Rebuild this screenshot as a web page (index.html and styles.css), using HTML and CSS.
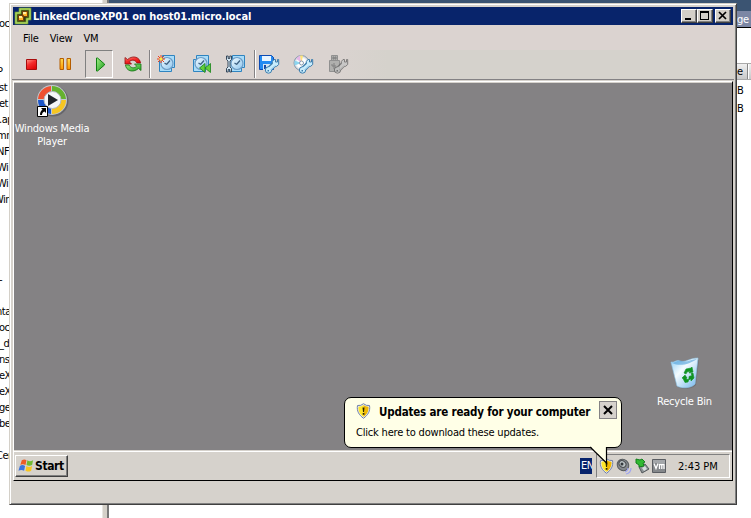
FILE: index.html
```html
<!DOCTYPE html>
<html lang="en">
<head>
<meta charset="utf-8">
<title>LinkedCloneXP01 on host01.micro.local</title>
<link rel="stylesheet" href="styles.css">
</head>
<body>
<svg width="0" height="0" class="defs" aria-hidden="true">
  <defs>
    <linearGradient id="blue" x2="1" y2="1"><stop stop-color="#f2fbff"/><stop offset="1" stop-color="#8fc6ee"/></linearGradient>
    <linearGradient id="green" x2="1" y2="1"><stop stop-color="#a4ee88"/><stop offset="1" stop-color="#1c9e1c"/></linearGradient>
    <linearGradient id="red" x2="0.6" y2="1"><stop stop-color="#ff9a8c"/><stop offset=".5" stop-color="#f42c2c"/><stop offset="1" stop-color="#e00808"/></linearGradient>
    <linearGradient id="amber" x2="0" y2="1"><stop stop-color="#ffdc50"/><stop offset="1" stop-color="#ff9500"/></linearGradient>
    <radialGradient id="silver"><stop offset=".6" stop-color="#fff"/><stop offset="1" stop-color="#c4ccd6"/></radialGradient>
    <linearGradient id="bin" x2="1" y2="1"><stop stop-color="#8ecdf4"/><stop offset=".4" stop-color="#f4fcff"/><stop offset="1" stop-color="#70b4ec"/></linearGradient>
    <g id="clock">
      <path d="M4.500.500h12v12h-3v4h-12v-12h3z" fill="#a9dcf8" stroke="#2f84c0"/>
      <circle cx="9" cy="8.500" r="6" fill="url(#blue)" stroke="#6d9cc6" stroke-width="1.200"/>
      <path d="M8.500 9.500l3.500-4M8.800 9.500L6.500 8" fill="none" stroke="#3d5f80" stroke-width="1.200"/>
    </g>
    <g id="wrench">
      <path d="M10 15L17 8" stroke="#3c7cac" stroke-width="5.500"/>
      <circle cx="10" cy="15" r="3.200" fill="#c8ecfc" stroke="#3c7cac"/>
      <path d="M15.500 4.500h1.500v2.500h2V4.500h1.200v5l-2 1.800h-2.500l-1.900-2V6.500z" fill="#c8ecfc" stroke="#3c7cac"/>
      <path d="M10 15L17.300 8.500" stroke="#c8ecfc" stroke-width="3.500"/>
      <path d="M12 15l4.500-4.500" stroke="#8cc6ea"/>
      <path d="M9 15h1.500v1.500H9z" fill="#3c7cac"/>
    </g>
    <g id="shield">
      <path d="M1.500 2.500Q5 3 7.500.7 10 3 13.500 2.500C14.500 8 12 12 7.500 15.300 3 12 .5 8 1.500 2.500z" fill="#e9edf6" stroke="#7180a8"/>
      <path d="M2.500 3.800q3 0 5-1.700v11.900C4 11.500 2 8 2.500 3.800z" fill="#ffe72c"/>
      <path d="M12.500 3.800q-3 0-5-1.700v11.900C11 11.500 13 8 12.500 3.800z" fill="#f0b800"/>
      <path d="M6.500 4.500h2L8 9H7zM6.700 10h1.700v1.700H6.700z" fill="#2a2500"/>
    </g>
  </defs>
</svg>
<div class="screen">
  <div class="back">
    <div class="list">
      <span>oca</span><span></span><span></span><span class="nudge">P</span><span>st</span><span>et</span><span>.ap</span><span class="nudge">mm</span><span class="nudge">NF</span><span class="nudge">Wi</span><span class="nudge">Wi</span><span class="deep">Win</span><span></span><span></span><span></span><span></span><span>-</span><span></span><span class="cut">nta</span><span>oca</span><span>_d</span><span>ns</span><span>eX</span><span>eX</span><span>ge</span><span>be</span><span></span><span class="cut">Cer</span>
    </div>
    <div class="splitter"></div>
    <div class="main">
      <div class="strip"></div>
      <div class="tabline">ge</div>
      <div class="blank"></div>
      <div class="colhead">e<i></i></div>
      <div class="cell">B</div>
      <div class="cell">B</div>
    </div>
  </div>

  <div class="window">
    <div class="titlebar">
      <svg class="app" width="18" height="18" viewBox="0 0 18 18"><path d="M6 2h10v10h-3v4H2V6h4z" fill="#343c10" stroke="#82b332" stroke-width="2.500"/><path d="M6 2h10v10h-3v4H2V6h4z" fill="none" stroke="#c2df7c" stroke-width=".8"/><path d="M8.500 4.500h5v5h-5zM4.500 8.500h5v5h-5z" fill="#ffb52b" stroke="#70400a"/><path d="M9 5h3v2H9zM5 9h3v2H5z" fill="#fff0a0"/></svg>
      <span class="title">LinkedCloneXP01 on host01.micro.local</span>
      <div class="controls">
        <b><svg width="14" height="12"><path d="M3 8h6v2H3z"/></svg></b><b><svg width="14" height="12"><path d="M2 1h9v9H2zM3 3v6h7V3z" fill-rule="evenodd"/></svg></b><b class="close"><svg width="14" height="12"><path d="M3 2l7 7M10 2L3 9" stroke="#000" stroke-width="1.700"/></svg></b>
      </div>
    </div>
    <div class="menu"><span>File</span><span>View</span><span>VM</span></div>
    <div class="toolbar">
      <div class="tool stop"><svg width="11" height="11" viewBox="0 0 11 11"><path d="M.5.500h10v10H.5z" fill="url(#red)" stroke="#a80c0c"/></svg></div>
      <div class="tool pause"><svg width="13" height="13"><path d="M1 .5h3.500v11H1zM8 .5h3.500v11H8z" fill="url(#amber)" stroke="#b45c00"/></svg></div>
      <div class="tool pressed"><svg width="11" height="15"><path d="M1.500 1v13h1L9.500 8V7L2.500 1z" fill="url(#green)" stroke="#108010"/></svg></div>
      <div class="tool reset"><svg width="18" height="18" viewBox="0 0 18 18"><path d="M1 2.500v6.500h6.500L5.300 6.800C7.500 4.500 11 4.500 13 8h3.500C16 2.500 9.500-.5 3.500 4.500z" fill="url(#red)" stroke="#8f1010" stroke-width=".8"/><path d="M17 15.500V9h-6.500l2.200 2.200c-2.200 2.300-5.700 2.300-7.700-1.200H1.500c.5 5.500 7 8.500 13 3.500z" fill="url(#green)" stroke="#167316" stroke-width=".8"/></svg></div>
      <i class="sep"></i>
      <div class="tool snap"><svg width="20" height="18" viewBox="0 0 20 18"><use href="#clock" x="1"/><path d="M4 0v8M0 4h8M1 1l6 6M7 1L1 7" stroke="#f0401c"/><circle cx="4" cy="4" r="1.600" fill="#ffed40"/></svg></div>
      <div class="tool revert"><svg width="20" height="18" viewBox="0 0 20 18"><use href="#clock"/><path d="M13 8.500v9l-5.500-4.500zM18.500 8.500v9L13 13z" fill="#64ce3a" stroke="#16831b" stroke-width=".8"/></svg></div>
      <div class="tool manage"><svg width="20" height="18" viewBox="0 0 20 18"><use href="#clock" x="2"/><path d="M.5 1v3.500l1.500 1.500v6L.5 13.500V17h1.700v-2.500h1.600V17h1.700v-3.500L4 12V6l1.500-1.500V1H3.800v2.500H2.200V1z" fill="#d4e8f4" stroke="#26394d" stroke-width=".9"/></svg></div>
      <i class="sep"></i>
      <div class="tool floppy"><svg width="21" height="19" viewBox="0 0 21 19"><path d="M.5.500h12l2 2v12H.5z" fill="#238bf2" stroke="#0c4bb4"/><path d="M3 1h9v5H3z" fill="#e8f5ff"/><path d="M4 9h8v6H4z" fill="#d4e5f3"/><path d="M5 10h2v4H5z" fill="#1747a3"/><use href="#wrench" x="-.5"/></svg></div>
      <div class="tool disc"><svg width="21" height="19" viewBox="0 0 21 19"><circle cx="8.500" cy="8" r="7.500" fill="url(#silver)" stroke="#8798ac"/><path d="M8.500 8L3 3.500l4-3z" fill="#e7b7e8"/><path d="M8.500 8L7 .5h3z" fill="#ffe478"/><path d="M8.500 8L1.500 10.500v-5z" fill="#8dd5ef"/><circle cx="8.500" cy="8" r="2" fill="#fff" stroke="#8798ac"/><use href="#wrench" x="-.5"/></svg></div>
      <div class="tool usb"><svg width="21" height="19" viewBox="0 0 21 19"><path d="M3.500.5h6v5h-6zM1.500 5.500h10v11h-10z" fill="#b0b0ae" stroke="#909090"/><path d="M5 2h1v2H5zM7 2h1v2H7zM6 8v6M4 9v2h4" fill="none" stroke="#808080"/><g class="muted"><use href="#wrench" x="-.5"/></g></svg></div>
    </div>

    <div class="console">
      <div class="desktop">
        <div class="shortcut wmp">
          <svg width="34" height="34" viewBox="0 0 34 34"><circle cx="18" cy="17" r="15.500" fill="#66666b"/><circle cx="17" cy="16" r="15" fill="#c3c9cf"/><path d="M16 2A14 14 0 0 0 3 15h7c0-4 3-7 6-7z" fill="#ef5130"/><path d="M17 2a14 14 0 0 1 14 13h-7c0-4-3-7-7-7z" fill="#65b22e"/><path d="M31 16a14 14 0 0 1-14 14v-7c4 0 7-3 7-7z" fill="#f6c622"/><path d="M3 16a14 14 0 0 0 13 14v-7c-4 0-6-3-6-7z" fill="#1c56ca"/><circle cx="17.500" cy="16" r="8.500" fill="#f5f7f9" stroke="#b4bbc4"/><path d="M13 10v12l10-6z" fill="#20242a"/><path d="M2.500 22.500h10v10h-10z" fill="#fff" stroke="#000"/><path d="M6 24h5v5L9.500 27.500C8 28 7 29 7 31H5c0-3 1-4 2.500-5.500z"/></svg>
          <span>Windows Media</span><span>Player</span>
        </div>
        <div class="shortcut bin">
          <svg width="32" height="32" viewBox="0 0 32 32"><path d="M3 6c8 1 20-1 27-3l-3 25c-3 4-13 5-18 2z" fill="#606068" opacity=".5"/><path d="M2 5c3 1 6-3 9-1 5 2 10-3 18-3l-3 26c-3 4-13 5-18 2z" fill="url(#bin)" stroke="#8fc6ea" stroke-width=".6"/><path d="M3 6c8 4 18 1 25-4-6 0-10 4-16 2-4-1-6 2-9 2z" fill="#4d9fd8" opacity=".6"/><path d="M15 16l2-4 5-1 1-1 1 5-4 1 1-2-3 1-1 2zM24 16l1 5-3 3v-2l-2 .5v-3l3-1-1-2zM19 25l-3 .5-2-4-1-.5 3-3 2 3h-1l1 1.500 2-.5z" fill="#109323" stroke="#109323" stroke-width=".6"/></svg>
          <span>Recycle Bin</span>
        </div>
      </div>
      <div class="taskbar">
        <div class="start"><svg width="16" height="16" viewBox="0 0 17 16"><path d="M4 2c2-1.500 4-1 5 0L8 7C6 6 4 6 2.500 7z" fill="#ed5c25"/><path d="M10 2c2 1.500 4 1 6 0l-1 5c-2 1-4 1-6 0z" fill="#72b931"/><path d="M2 8c2-1.500 4-1 5.500 0l-1 5c-2-1-4-1-6 0z" fill="#3c74dd"/><path d="M9 8c2 1.500 4 1 6 0l-1 5c-2 1.500-4 1-6 0z" fill="#f8c51e"/></svg><span>Start</span></div>
        <span class="lang">EN</span>
        <div class="tray">
          <svg width="15" height="16" viewBox="0 0 15 16"><use href="#shield"/></svg>
          <svg width="17" height="17" viewBox="0 0 17 17"><ellipse cx="7" cy="7" rx="6" ry="5.500" transform="rotate(40 7 7)" fill="#85898d" stroke="#55595d"/><ellipse cx="6.500" cy="6" rx="3.700" ry="3" transform="rotate(40 6.500 6)" fill="#b9c0c2" stroke="#4a4d50"/><circle cx="6" cy="6" r="1.500" fill="#33383c"/><path d="M12 10q0 3-3 4M15 10q0 5-5 6" fill="none" stroke="#a0a6ee" stroke-width="1.200"/></svg>
          <svg width="15" height="16" viewBox="0 0 15 16"><path d="M4 9l6-3 4 5-7 4z" fill="#8b9294" stroke="#54595c"/><path d="M7 10l3-2 2 3-3 2z" fill="#d6dddd"/><path d="M1 1l4 1 2-1 3 3-2 1 1 3-5 1V7L1 5z" fill="#32b933" stroke="#14801d"/></svg>
          <svg width="15" height="15" viewBox="0 0 15 15"><path d="M.5.500h13v13H.5z" fill="#85888b" stroke="#5a5d62"/><path d="M1 1h12v3H1z" fill="#a4a7aa"/><path d="M2 4.500l2 5 2-5M7.500 10V5.500h4.500V10M9.800 5.500V10" fill="none" stroke="#fff" stroke-width="1.300"/></svg>
          <time>2:43 PM</time>
        </div>
      </div>
      <div class="balloon">
        <div class="headline"><svg width="15" height="16" viewBox="0 0 15 16"><use href="#shield"/></svg><strong>Updates are ready for your computer</strong><button aria-label="Close"><svg width="16" height="16"><path d="M4 4l8 8M12 4l-8 8" stroke="#000" stroke-width="2"/></svg></button></div>
        <p>Click here to download these updates.</p>
        <svg class="tail" width="18" height="19" viewBox="0 0 18 19"><path d="M0 0h17v17z" fill="#ffffe7"/><path d="M0 1l16.500 16V1" fill="none" stroke="#000" stroke-width="1.200"/></svg>
      </div>
    </div>
  </div>
</div>
</body>
</html>
```

FILE: styles.css
```css
* { box-sizing: border-box; }
body { margin: 0; font: 11px/16px "DejaVu Sans Condensed", "DejaVu Sans", sans-serif; font-stretch: condensed; letter-spacing: -.19px; color: #000; }
svg { display: block; flex: none; }
.defs { position: absolute; }
.screen { position: relative; width: 751px; height: 518px; overflow: hidden; background: #fff; }
.back { display: flex; height: 518px; }
.list { width: 102px; padding-top: 16px; display: grid; grid-auto-rows: 16px; align-content: start; letter-spacing: -.5px; }
.list span { text-indent: -1px; }
.list .nudge { text-indent: -3px; }
.list .cut { text-indent: -4px; }
.list .deep { text-indent: -6px; }
.splitter { width: 7px; background: #d4d0c8; border-left: 1px solid #e8e6e2; border-right: 2px solid #777; }
.main { flex: 1; }
.main > div { padding-left: 628px; }
.strip { height: 11px; background: #3b5472; }
.tabline { height: 17px; line-height: 17px; background: #7c87a5; color: #fff; border-bottom: 1px solid #000; }
.blank { height: 35px; }
.colhead { display: flex; height: 17px; background: linear-gradient(#f0f0f0, #c8c8c8); border: solid #aaa; border-width: 1px 0; line-height: 15px; }
.colhead i { width: 2px; margin-left: 4px; background: #888; border-right: 1px solid #fff; }
.cell { height: 18px; line-height: 22px; }

.window { position: absolute; left: 9px; top: 3px; width: 728px; height: 502px; padding: 2px; border: 1px solid; border-color: #d4d0c8 #404040 #404040 #d4d0c8; background: #d6d2cc; box-shadow: inset 1px 1px #fff, inset -1px -1px #808080; }
.titlebar { display: flex; align-items: center; height: 18px; margin: 1px 1px 0; background: #08246b; color: #fff; }
.app { margin-left: 1px; }
.title { margin-left: 1px; padding-top: 1px; font-weight: bold; letter-spacing: -.06px; white-space: nowrap; }
.controls { display: flex; margin-left: auto; margin-right: 2px; }
.controls b { width: 16px; height: 14px; background: #d4d0c8; border: 1px solid; border-color: #fff #404040 #404040 #fff; box-shadow: inset -1px -1px #808080; }
.controls .close { margin-left: 2px; }
.menu { display: flex; height: 25px; gap: 11px; padding: 6px 0 0 11px; background: #dbd3d0; }
.toolbar { display: flex; height: 30px; padding-left: 6px; background: linear-gradient(90deg, #dad3d0 45%, #d5d2cc 52%); border-bottom: 1px solid #848284; }
.tool { width: 28px; height: 28px; display: flex; align-items: center; justify-content: center; flex: none; }
.stop { width: 27px; }
.pause { width: 40px; }
.pressed { margin-right: 7px; border: 1px solid; border-color: #808080 #fff #fff #808080; padding-left: 3px; }
.reset { width: 26px; }
.sep { width: 2px; height: 28px; margin: 0 0 0 3px; background: #848284; border-right: 1px solid #fff; }
.snap { width: 31px; }
.revert { width: 39px; }
.manage { width: 30px; }
.floppy { width: 27px; }
.disc { width: 40px; }
.usb { width: 30px; }
.muted { filter: grayscale(1) brightness(.85); opacity: .75; }

.console { position: relative; width: 720px; height: 400px; margin: 1px 0 0 1px; padding-top: 1px; border: 1px solid; border-color: #fff #000 #000 #fff; }
.desktop { height: 367px; display: flex; justify-content: space-between; background: #848284; }
.shortcut { display: flex; flex-direction: column; align-items: center; width: 76px; line-height: 13px; color: #fff; white-space: nowrap; }
.wmp { padding-top: 1px; }
.wmp svg { margin-bottom: 4px; }
.bin { align-self: flex-end; width: 95px; padding-bottom: 42px; }
.bin svg { margin-bottom: 6px; }
.taskbar { display: flex; align-items: center; height: 30px; padding: 1px 2px 0 1px; background: #d6d2cc; border-top: 1px solid #d6d2cc; box-shadow: inset 0 1px #fff; }
.start { display: flex; align-items: center; width: 53px; height: 22px; padding-left: 2px; border: 1px solid; border-color: #fff #404040 #404040 #fff; box-shadow: inset -1px -1px #808080; font-weight: bold; font-size: 12px; letter-spacing: -.4px; }
.start span { margin-left: 1px; }
.lang { width: 12px; height: 16px; margin-left: auto; padding-left: 1px; overflow: hidden; background: #08246b; color: #fff; letter-spacing: -.6px; }
.tray { display: flex; align-items: center; gap: 2px; width: 134px; height: 24px; margin-left: 4px; padding-left: 2px; border: 1px solid; border-color: #808080 #fff #fff #808080; }
.tray time { margin-left: 9px; padding-top: 1px; letter-spacing: 0; white-space: nowrap; }

.balloon { position: absolute; left: 330px; top: 315px; width: 278px; height: 51px; padding: 3px 4px 0 11px; border: 1px solid #000; border-radius: 7px; background: #ffffe7; }
.headline { display: flex; align-items: center; height: 20px; }
.headline strong { margin-left: 8px; padding-top: 1px; font-size: 11.5px; letter-spacing: -.18px; white-space: nowrap; }
.headline button { width: 18px; height: 18px; margin-left: auto; margin-bottom: 2px; padding: 0; border: 1px solid #848284; background: #d6d2cc; }
.balloon p { margin: 4px 0 0; white-space: nowrap; }
.tail { position: absolute; left: 245px; top: 48px; }
```
